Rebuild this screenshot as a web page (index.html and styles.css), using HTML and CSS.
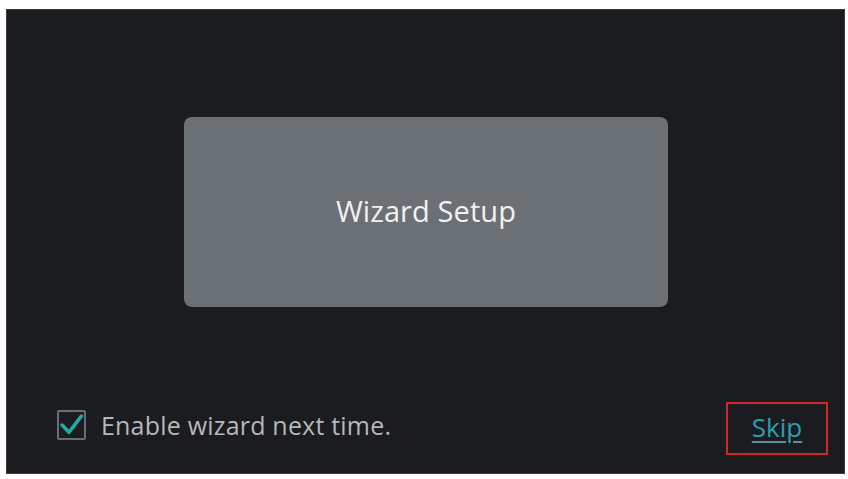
FILE: index.html
```html
<!DOCTYPE html>
<html>
<head>
<meta charset="utf-8">
<link rel="stylesheet" href="styles.css">
</head>
<body>
<div class="panel">
  <div class="wizard-btn">Wizard Setup</div>
  <div class="footer">
    <label class="check">
      <span class="box">
        <svg viewBox="0 0 24 24" width="25" height="25"><path d="M3 12.5 L9.5 19.5 L21.5 4" fill="none" stroke="#23aaa6" stroke-width="3.4" stroke-linecap="round" stroke-linejoin="round"/></svg>
      </span>
      <span class="label">Enable wizard next time.</span>
    </label>
    <div class="skip-box"><span class="skip">Skip</span></div>
  </div>
</div>
</body>
</html>
```
FILE: styles.css
```css
html, body {
  margin: 0;
  padding: 0;
  background: #ffffff;
}
body {
  padding: 9px 3px 5px 6px;
  font-family: "Open Sans", "Noto Sans", sans-serif;
}
.panel {
  box-sizing: border-box;
  width: 839px;
  height: 465px;
  background: #1b1c20;
  border: 1px solid #3a3b3f;
  display: flex;
  flex-direction: column;
  align-items: center;
  padding: 107px 16px 18px 50px;
}
.wizard-btn {
  width: 484px;
  height: 190px;
  margin-left: -33px;
  background: #6b7075;
  border-radius: 8px;
  display: flex;
  align-items: center;
  justify-content: center;
  color: #f0f2f2;
  font-size: 29px;
  letter-spacing: 0.1px;
  padding-bottom: 4px;
  box-sizing: border-box;
}
.footer {
  margin-top: auto;
  align-self: stretch;
  display: flex;
  align-items: center;
  justify-content: space-between;
}
.check {
  display: flex;
  align-items: center;
  gap: 15px;
  margin-top: -8px;
}
.box {
  box-sizing: border-box;
  width: 29px;
  height: 30px;
  border: 2px solid #6a6e73;
  border-radius: 2px;
  display: flex;
  align-items: center;
  justify-content: center;
}
.label {
  color: #b4b8bc;
  font-size: 25px;
  letter-spacing: 0.2px;
}
.skip-box {
  box-sizing: border-box;
  width: 102px;
  height: 53px;
  border: 2px solid #d0252f;
  display: flex;
  align-items: center;
  justify-content: center;
}
.skip {
  color: #2d9fb0;
  font-size: 26px;
  text-decoration: underline;
  text-decoration-color: #5c8fa0;
  text-underline-offset: 4px;
  margin-top: -4px;
}
```
